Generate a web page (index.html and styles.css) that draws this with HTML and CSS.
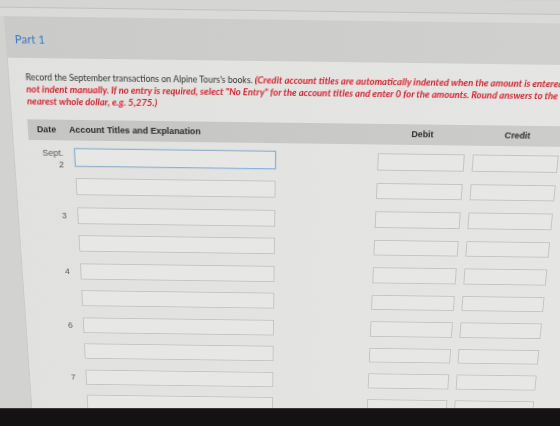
FILE: index.html
```html
<!DOCTYPE html>
<html lang="en">
<head>
<meta charset="utf-8">
<title>Part 1 – Journal entries</title>
<link rel="stylesheet" href="styles.css">
</head>
<body>
<div class="screen">
  <div class="page">
    <div class="topbar"></div>
    <div class="subbar"></div>
    <section class="part">
      <h2 class="part-title">Part 1</h2>
    </section>
    <section class="panel">
      <p class="instructions"><span class="lead">Record the September transactions on Alpine Tours's books.</span> <em class="note">(Credit account titles are automatically indented when the amount is entered. Do</em><br><em class="note">not indent manually. If no entry is required, select "No Entry" for the account titles and enter 0 for the amounts. Round answers to the</em><br><em class="note">nearest whole dollar, e.g. 5,275.)</em></p>

      <div class="journal">
        <div class="journal-head">
          <span class="head-date">Date</span>
          <span class="head-account">Account Titles and Explanation</span>
          <span class="head-debit">Debit</span>
          <span class="head-credit">Credit</span>
        </div>

        <div class="row row-first">
          <span class="date date-two">Sept.<br>2</span>
          <input class="account focused" type="text">
          <input class="amount debit" type="text">
          <input class="amount credit" type="text">
        </div>
        <div class="row">
          <span class="date"></span>
          <input class="account" type="text">
          <input class="amount debit" type="text">
          <input class="amount credit" type="text">
        </div>
        <div class="row">
          <span class="date">3</span>
          <input class="account" type="text">
          <input class="amount debit" type="text">
          <input class="amount credit" type="text">
        </div>
        <div class="row">
          <span class="date"></span>
          <input class="account" type="text">
          <input class="amount debit" type="text">
          <input class="amount credit" type="text">
        </div>
        <div class="row">
          <span class="date">4</span>
          <input class="account" type="text">
          <input class="amount debit" type="text">
          <input class="amount credit" type="text">
        </div>
        <div class="row">
          <span class="date"></span>
          <input class="account" type="text">
          <input class="amount debit" type="text">
          <input class="amount credit" type="text">
        </div>
        <div class="row">
          <span class="date">6</span>
          <input class="account" type="text">
          <input class="amount debit" type="text">
          <input class="amount credit" type="text">
        </div>
        <div class="row">
          <span class="date"></span>
          <input class="account" type="text">
          <input class="amount debit" type="text">
          <input class="amount credit" type="text">
        </div>
        <div class="row">
          <span class="date">7</span>
          <input class="account" type="text">
          <input class="amount debit" type="text">
          <input class="amount credit" type="text">
        </div>
        <div class="row">
          <span class="date"></span>
          <input class="account" type="text">
          <input class="amount debit" type="text">
          <input class="amount credit" type="text">
        </div>
      </div>
    </section>
  </div>
</div>
<div class="bezel"></div>
</body>
</html>
```

FILE: styles.css
```css
html, body {
  margin: 0;
  padding: 0;
  height: 100%;
}

body {
  display: flex;
  flex-direction: column;
  background: #d4d4d2;
  overflow: hidden;
  font-family: Lato, "Liberation Sans", sans-serif;
}

/* visible part of the display */
.screen {
  height: 408px;
  overflow: hidden;
  background: #d2d2d0;
  flex: none;
}

/* the page, seen slightly from above and tilted */
.page {
  width: 660px;
  height: 500px;
  background: #d2d2d0;
  transform-origin: 280px 150px;
  transform: rotate(0.75deg) perspective(800px) rotateX(-14deg);
}

.topbar {
  height: 12px;
  background: #d5d5d3;
  border-bottom: 1px solid #c2c2c0;
}

.subbar {
  height: 8px;
  background: #dadad8;
}

.part {
  box-sizing: border-box;
  height: 40px;
  margin-left: 13px;
  padding: 15px 0 0 9px;
  background: linear-gradient(90deg, #cacac8, #d1d1cf);
}

.part-title {
  margin: 0;
  font-family: Lato, sans-serif;
  font-weight: 400;
  font-size: 11px;
  line-height: 13px;
  color: #3c79bc;
}

.panel {
  margin-left: 13px;
  padding: 12.75px 0 0 16px;
  height: 460px;
  background: linear-gradient(90deg, #e1e1df, #e6e6e4);
  border-left: 1px solid #cbcbc9;
}

.instructions {
  margin: 0;
  font-family: Lato, sans-serif;
  font-size: 9.4px;
  line-height: 11.4px;
  color: #333;
  white-space: nowrap;
}

.lead {
  font-size: 8.5px;
}

.note {
  font-weight: 700;
  font-style: italic;
  color: #d8232f;
}

.journal {
  margin: 12.75px 0 0 -1px;
}

.journal-head,
.row {
  display: grid;
  grid-template-columns: 37px 202px 86px 87px 86px;
  column-gap: 8px;
}

.journal-head {
  height: 21px;
  align-items: center;
  background: linear-gradient(90deg, #c5c5c3, #cdcdcb);
  font-family: "Liberation Sans", Arial, sans-serif;
  font-weight: 700;
  font-size: 8.8px;
  color: #2a2a2a;
  white-space: nowrap;
  margin-bottom: 9px;
}

.head-date {
  padding-left: 9px;
}

.head-account {
  margin-left: -4px;
}

.head-debit {
  grid-column: 4;
  text-align: center;
}

.head-credit {
  grid-column: 5;
  text-align: center;
}

.row {
  height: 30.5px;
  align-items: start;
}

.date {
  padding-right: 3px;
  font-family: "Liberation Sans", Arial, sans-serif;
  font-size: 9px;
  line-height: 18px;
  color: #585858;
  text-align: right;
}

.date-two {
  line-height: 12px;
  margin-top: -2px;
}

input {
  box-sizing: border-box;
  margin: 0;
  padding: 0;
  height: 18px;
  border: 1px solid #c4c4c2;
  background: #e7e7e5;
  outline: none;
}

.account.focused {
  height: 19px;
  margin-top: -0.5px;
  border-color: #8fb0d2;
  box-shadow: 0 0 0 0.5px #b7cbe0;
}

.debit {
  grid-column: 4;
}

.credit {
  grid-column: 5;
}

.amount {
  height: 17.5px;
  margin-top: 0.5px;
}

.bezel {
  flex: 1;
  background: #151213;
  border-top: 1px solid #3a3838;
}
```
